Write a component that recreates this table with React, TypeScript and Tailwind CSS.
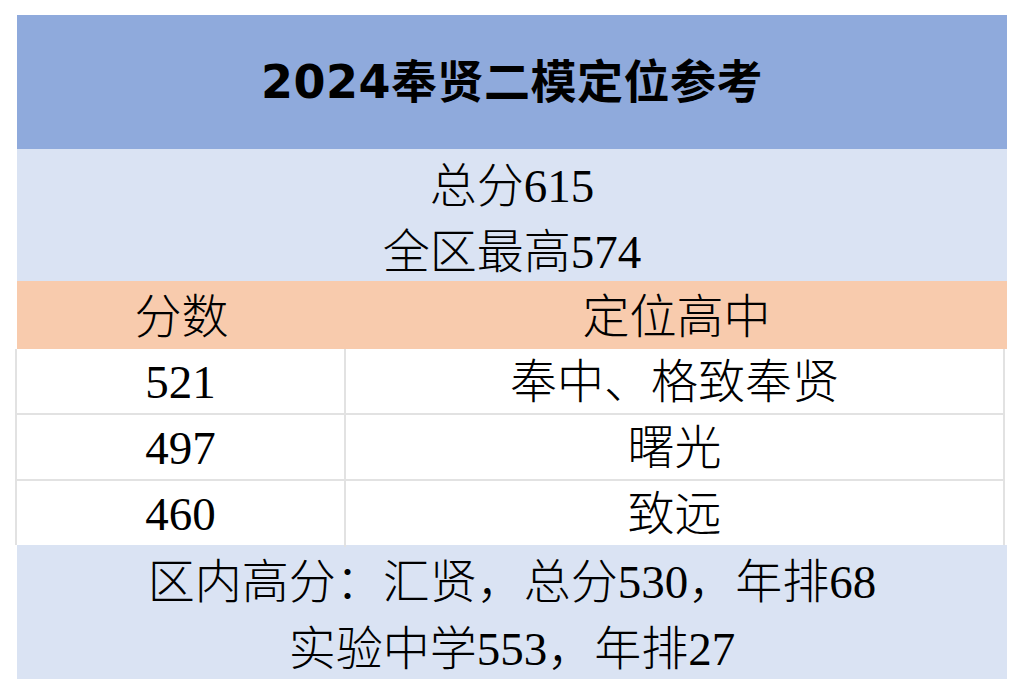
const body = { fontFamily: '"Liberation Serif", "Noto Sans CJK SC", serif' }
const title = { fontFamily: '"DejaVu Sans", "Noto Sans CJK SC", sans-serif' }

const rows = [
  { score: '521', school: '奉中、格致奉贤' },
  { score: '497', school: '曙光' },
  { score: '460', school: '致远' },
]

export default function App() {
  return (
    <div className="w-[1022px] h-[694px] bg-white pt-[15px] pl-[17px] text-black" style={body}>
      <div className="w-[990px]">
        {/* 标题 */}
        <div className="h-[134px] bg-[#8faadc] flex items-center justify-center">
          <h1 className="text-[46px] font-bold leading-none tracking-[0.5px]" style={title}>2024奉贤二模定位参考</h1>
        </div>

        {/* 总分 */}
        <div className="h-[132px] bg-[#dae3f3] flex flex-col items-center text-[47px] font-light pt-[4px]">
          <div className="h-[66px] leading-[66px]">总分615</div>
          <div className="h-[66px] leading-[66px]">全区最高574</div>
        </div>

        {/* 表头 */}
        <div className="h-[68px] bg-[#f8cbad] grid grid-cols-[329px_1fr] text-[47px] font-light leading-[68px] pt-[2px]">
          <div className="text-center">分数</div>
          <div className="text-center">定位高中</div>
        </div>

        {/* 数据 */}
        <div className="-ml-[2px] w-[990px] border-x-2 border-[#e2e2e2] bg-white">
          {rows.map((r, i) => (
            <div
              key={r.score}
              className={`grid grid-cols-[329px_1fr] text-[47px] font-light ${i < rows.length - 1 ? 'h-[66px] border-b-2 border-[#e2e2e2]' : 'h-[64px]'}`}
            >
              <div className="text-center border-r-2 border-[#e2e2e2] leading-[66px]">{r.score}</div>
              <div className="text-center leading-[66px]">{r.school}</div>
            </div>
          ))}
        </div>

        {/* 区内高分 */}
        <div className="h-[134px] bg-[#dae3f3] flex flex-col items-center text-[47px] font-light pt-[4px]">
          <div className="h-[67px] leading-[67px]">区内高分：汇贤，总分530，年排68</div>
          <div className="h-[67px] leading-[67px]">实验中学553，年排27</div>
        </div>
      </div>
    </div>
  )
}
